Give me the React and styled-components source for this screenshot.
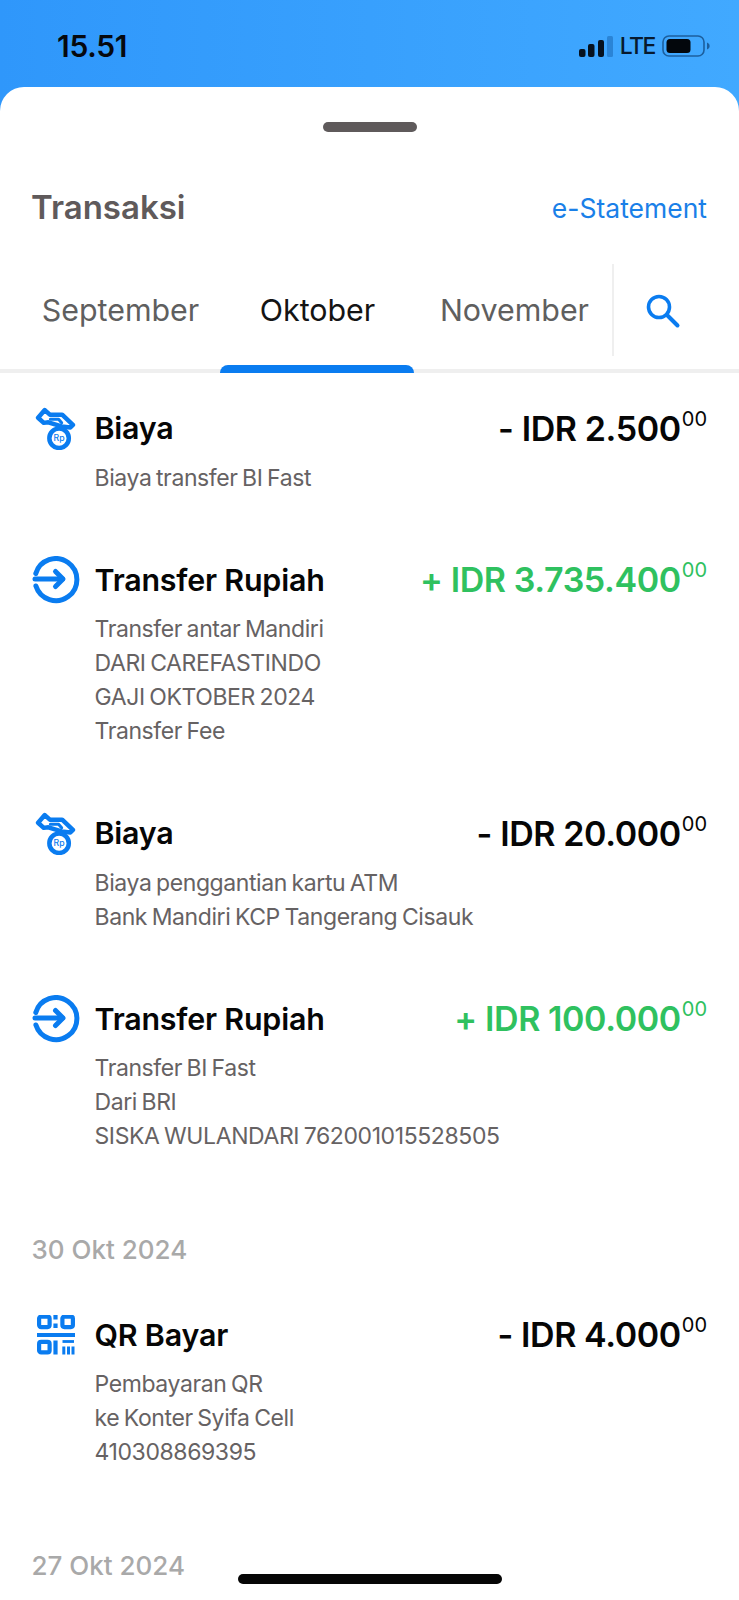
import React from "react";
import styled, { createGlobalStyle } from "styled-components";

const GlobalStyle = createGlobalStyle`
  html, body {
    margin: 0;
    padding: 0;
    height: 1600px;
    overflow: hidden;
    background: #fff;
  }
  body {
    font-family: "Inter", "Liberation Sans", sans-serif;
  }
`;

const Screen = styled.div`
  width: 739px;
  height: 1600px;
  position: relative;
  overflow: hidden;
  background: linear-gradient(90deg, #2f97fb 0%, #41a9ff 100%);
`;

const StatusBar = styled.div`
  height: 87px;
  box-sizing: border-box;
  padding: 5px 29px 0 57px;
  display: flex;
  align-items: center;
  justify-content: space-between;
`;

const Clock = styled.div`
  font-size: 30px;
  font-weight: 600;
  color: #06090f;
  letter-spacing: -0.3px;
`;

const StatusIcons = styled.div`
  display: flex;
  align-items: center;
  gap: 7px;
`;

const Lte = styled.span`
  font-size: 23px;
  font-weight: 500;
  color: #071a2e;
  letter-spacing: -1.5px;
`;

const Sheet = styled.div`
  height: 1513px;
  background: #fff;
  border-radius: 24px 24px 0 0;
  overflow: hidden;
`;

const Handle = styled.div`
  width: 94px;
  height: 10px;
  margin: 35px auto 0;
  border-radius: 5px;
  background: #5f5a5b;
`;

const TitleRow = styled.div`
  display: flex;
  align-items: center;
  justify-content: space-between;
  padding: 0 32px 0 31px;
  margin-top: 53px;
  height: 44px;
`;

const Title = styled.h1`
  margin: 0;
  font-size: 33px;
  font-weight: 600;
  color: #5f5a5b;
  letter-spacing: 0;
`;

const StatementLink = styled.a`
  font-size: 26.5px;
  font-weight: 400;
  color: #1a80e8;
  padding-top: 2px;
`;

const TabBar = styled.div`
  margin-top: 35px;
  height: 109px;
  display: flex;
  box-sizing: border-box;
  padding-left: 22px;
  border-bottom: 4px solid #efefef;
`;

const Tabs = styled.div`
  display: grid;
  grid-template-columns: repeat(3, 197px);
  width: 590px;
`;

const Tab = styled.div`
  position: relative;
  display: flex;
  justify-content: center;
  padding-top: 28px;
  font-size: 30.4px;
  font-weight: 400;
  color: ${(p) => (p.$active ? "#141414" : "#5f5f5f")};
  &::after {
    content: "";
    display: ${(p) => (p.$active ? "block" : "none")};
    position: absolute;
    left: 1px;
    right: 2px;
    bottom: -4px;
    height: 8px;
    border-radius: 8px 8px 0 0;
    background: #0a7cf0;
  }
`;

const SearchCell = styled.div`
  flex: 1;
  height: 90px;
  border-left: 2px solid #efefef;
  display: flex;
  align-items: center;
  justify-content: center;
  padding-right: 28px;
  padding-top: 2px;
`;

const List = styled.div`
  padding: 35px 32px 0 31.5px;
`;

const Row = styled.div`
  display: grid;
  grid-template-columns: 48px 1fr;
  column-gap: 15px;
  margin-bottom: 65px;
`;

const IconSlot = styled.div`
  height: 40px;
  display: flex;
  align-items: center;
  justify-content: center;
  overflow: visible;
`;

const RowHead = styled.div`
  display: flex;
  align-items: center;
  justify-content: space-between;
  height: 40px;
`;

const RowTitle = styled.div`
  font-size: 30.4px;
  font-weight: 600;
  color: #060606;
  letter-spacing: -0.2px;
`;

const Amount = styled.div`
  font-size: 34px;
  font-weight: 600;
  color: ${(p) => (p.$income ? "#2fc15f" : "#060606")};
  letter-spacing: -0.4px;
`;

const Cents = styled.sup`
  font-size: 20px;
  font-weight: 400;
  line-height: 0;
  vertical-align: 15px;
  letter-spacing: 0;
  margin-left: 1px;
`;

const Desc = styled.div`
  grid-column: 2;
  margin-top: 12.5px;
  font-size: 23px;
  line-height: 34px;
  letter-spacing: -0.4px;
  word-spacing: -1.5px;
  color: #666263;
`;

const DateLabel = styled.div`
  margin: 79.5px 0 48px;
  height: 34px;
  line-height: 34px;
  font-size: 26px;
  font-weight: 500;
  color: #a9a9a9;
`;

const HomeBar = styled.div`
  position: absolute;
  left: 238px;
  bottom: 16px;
  width: 264px;
  height: 10px;
  border-radius: 5px;
  background: #060606;
`;

const SignalIcon = () => (
  <svg width="34" height="21" viewBox="0 0 34 21">
    <rect x="0" y="13" width="6.5" height="8" rx="2" fill="#06121f" />
    <rect x="9" y="8" width="6.5" height="13" rx="2" fill="#06121f" />
    <rect x="19" y="4" width="6" height="17" rx="2" fill="#06121f" />
    <rect x="28" y="0" width="6" height="21" rx="1.5" fill="#2a84d6" />
  </svg>
);

const BatteryIcon = () => (
  <svg width="48" height="22" viewBox="0 0 48 22">
    <rect x="1" y="1" width="41" height="20" rx="6" fill="none" stroke="#1c5f9e" strokeWidth="1.6" />
    <rect x="4.5" y="4" width="24" height="14" rx="3.5" fill="#03070c" />
    <path d="M45 7.5c2 .8 2.6 2 2.6 3.5S47 13.700 45 14.500z" fill="#1c5f9e" />
  </svg>
);

const SearchIcon = () => (
  <svg width="36" height="36" viewBox="0 0 36 36" fill="none" stroke="#0a7cf0" strokeLinecap="round">
    <circle cx="14" cy="14" r="10.500" strokeWidth="3.600" />
    <path d="M22 22 L32.500 32.500" strokeWidth="4" />
  </svg>
);

const FeeIcon = () => (
  <svg width="43" height="43" viewBox="0 0 42 42" fill="none" stroke="#0a7cf0" strokeWidth="4.400" strokeLinejoin="round" strokeLinecap="round">
    <path d="M4 10.500 L10.500 3 L15.500 7.500 L27.500 7.500 L38 17.500 L35.500 20 L27 19 L14 15 L9.500 15.500 Z" />
    <path d="M16 12 L24 12 L27 15.500" strokeWidth="3" />
    <circle cx="24.500" cy="30.500" r="9.500" fill="#fff" />
    <text x="24.500" y="33.500" textAnchor="middle" fontFamily="Inter, sans-serif" fontSize="8.500" fontWeight="500" fill="#0a7cf0" stroke="none">Rp</text>
  </svg>
);

const TransferIcon = () => (
  <svg width="48" height="48" viewBox="0 1 48 48" fill="none" stroke="#0a7cf0" strokeWidth="5" strokeLinecap="round" strokeLinejoin="round">
    <path d="M3.800 18.500 A21 21 0 1 1 3.900 31" />
    <path d="M3 24 H30.500" />
    <path d="M23.500 16.500 L31 24 L23.500 31.500" />
  </svg>
);

const QrIcon = () => (
  <svg width="38" height="40" viewBox="0 0.500 38 40" fill="none" stroke="#0a7cf0" strokeWidth="4.200">
    <rect x="2.100" y="2.100" width="10.500" height="10.500" rx="2" />
    <rect x="25.400" y="2.100" width="10.500" height="10.500" rx="2" />
    <rect x="2.100" y="27.400" width="10.500" height="10.500" rx="2" />
    <path d="M0 20.500 H38" />
    <path d="M18.500 0.500 V5 M18.500 9 V13.500 M18.500 26 V40" />
    <path d="M25.500 27 H37" strokeWidth="2.800" />
    <path d="M26.800 32 V40 M31.500 32 V40 M36 32 V40" strokeWidth="3" />
  </svg>
);

const Transaction = ({ icon, title, sign, value, income, lines }) => (
  <Row>
    <IconSlot>{icon}</IconSlot>
    <RowHead>
      <RowTitle>{title}</RowTitle>
      <Amount $income={income}>
        {sign} IDR {value}
        <Cents>00</Cents>
      </Amount>
    </RowHead>
    <Desc>
      {lines.map((line) => (
        <div key={line}>{line}</div>
      ))}
    </Desc>
  </Row>
);

const App = () => {
  return (
    <Screen>
      <GlobalStyle />
      <StatusBar>
        <Clock>15.51</Clock>
        <StatusIcons>
          <SignalIcon />
          <Lte>LTE</Lte>
          <BatteryIcon />
        </StatusIcons>
      </StatusBar>
      <Sheet>
        <Handle />
        <TitleRow>
          <Title>Transaksi</Title>
          <StatementLink>e-Statement</StatementLink>
        </TitleRow>
        <TabBar>
          <Tabs>
            <Tab>September</Tab>
            <Tab $active>Oktober</Tab>
            <Tab>November</Tab>
          </Tabs>
          <SearchCell>
            <SearchIcon />
          </SearchCell>
        </TabBar>
        <List>
          <Transaction icon={<FeeIcon />} title="Biaya" sign="-" value="2.500" lines={["Biaya transfer BI Fast"]} />
          <Transaction
            icon={<TransferIcon />}
            title="Transfer Rupiah"
            sign="+"
            value="3.735.400"
            income
            lines={["Transfer antar Mandiri", "DARI CAREFASTINDO", "GAJI OKTOBER 2024", "Transfer Fee"]}
          />
          <Transaction
            icon={<FeeIcon />}
            title="Biaya"
            sign="-"
            value="20.000"
            lines={["Biaya penggantian kartu ATM", "Bank Mandiri KCP Tangerang Cisauk"]}
          />
          <Transaction
            icon={<TransferIcon />}
            title="Transfer Rupiah"
            sign="+"
            value="100.000"
            income
            lines={["Transfer BI Fast", "Dari BRI", "SISKA WULANDARI 762001015528505"]}
          />
          <DateLabel>30 Okt 2024</DateLabel>
          <Transaction
            icon={<QrIcon />}
            title="QR Bayar"
            sign="-"
            value="4.000"
            lines={["Pembayaran QR", "ke Konter Syifa Cell", "410308869395"]}
          />
          <DateLabel>27 Okt 2024</DateLabel>
        </List>
      </Sheet>
      <HomeBar />
    </Screen>
  );
};

export default App;
